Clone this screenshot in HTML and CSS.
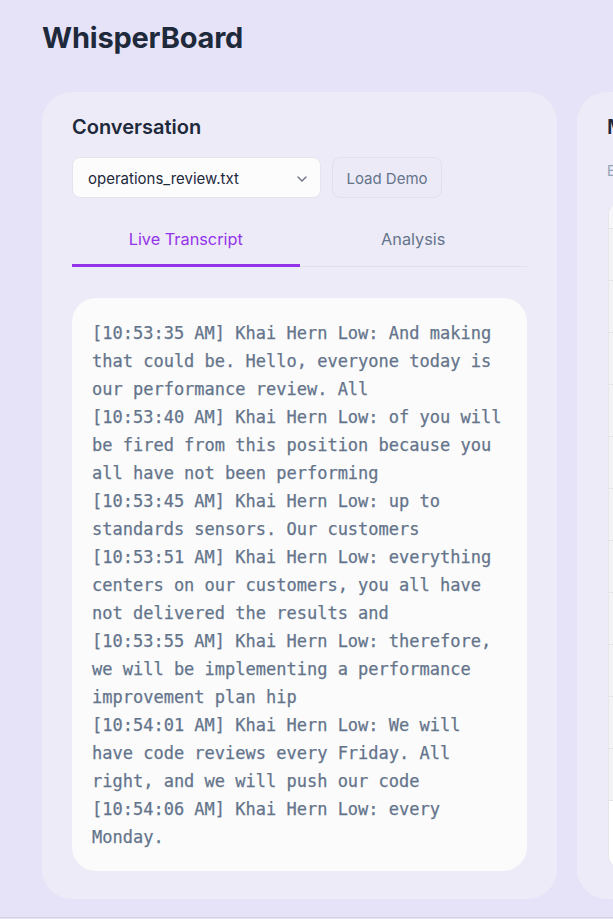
FILE: index.html
```html
<!DOCTYPE html>
<html lang="en">
<head>
<meta charset="utf-8">
<title>WhisperBoard</title>
<link rel="stylesheet" href="styles.css">
</head>
<body>
<div class="page">
  <h1 class="title">WhisperBoard</h1>
  <div class="columns">
    <section class="card conv">
      <h2 class="card-title">Conversation</h2>
      <div class="controls">
        <div class="select">
          <span>operations_review.txt</span>
          <svg class="chev" width="10" height="6" viewBox="0 0 10 6"><path d="M1 1l4 4 4-4" fill="none" stroke="#6b7280" stroke-width="1.4" stroke-linecap="round" stroke-linejoin="round"/></svg>
        </div>
        <button class="btn">Load Demo</button>
      </div>
      <div class="tabs">
        <div class="tab active">Live Transcript</div>
        <div class="tab">Analysis</div>
      </div>
      <div class="transcript">
        <div>[10:53:35 AM] Khai Hern Low: And making that could be. Hello, everyone today is our performance review. All</div>
        <div>[10:53:40 AM] Khai Hern Low: of you will be fired from this position because you all have not been performing</div>
        <div>[10:53:45 AM] Khai Hern Low: up to standards sensors. Our customers</div>
        <div>[10:53:51 AM] Khai Hern Low: everything centers on our customers, you all have not delivered the results and</div>
        <div>[10:53:55 AM] Khai Hern Low: therefore, we will be implementing a performance improvement plan hip</div>
        <div>[10:54:01 AM] Khai Hern Low: We will have code reviews every Friday. All right, and we will push our code</div>
        <div>[10:54:06 AM] Khai Hern Low: every Monday.</div>
      </div>
    </section>
    <section class="card side">
      <h2 class="card-title">Meeting Notes</h2>
      <p class="sub">Entries captured during the conversation</p>
      <div class="table">
        <div class="row head"></div>
        <div class="row"></div>
        <div class="row"></div>
        <div class="row"></div>
        <div class="row"></div>
        <div class="row"></div>
        <div class="row"></div>
        <div class="row"></div>
        <div class="row"></div>
        <div class="row"></div>
        <div class="row"></div>
        <div class="row"></div>
        <div class="blank"></div>
      </div>
    </section>
  </div>
</div>
</body>
</html>
```
FILE: styles.css
```css
html, body {
  margin: 0;
  padding: 0;
  overflow: hidden;
}
body {
  background: #e6e3f8;
  font-family: Inter, "Noto Sans", sans-serif;
  color: #1e293b;
}
.page {
  box-sizing: border-box;
  height: 918px;
  padding: 21px 0 0 42px;
  border-bottom: 1px solid #d6d5dd;
}
.title {
  margin: 0 0 37px 0;
  font-size: 29px;
  line-height: 34px;
  font-weight: 700;
  color: #1e293b;
  letter-spacing: -0.2px;
}
.columns {
  display: flex;
  gap: 20px;
  width: 1200px;
}
.card {
  box-sizing: border-box;
  width: 515px;
  height: 807px;
  background: #edebf7;
  border-radius: 30px;
  padding: 23px 30px 30px 30px;
  display: flex;
  flex-direction: column;
  flex: none;
}
.card-title {
  margin: 0;
  font-size: 20px;
  line-height: 24px;
  font-weight: 600;
  color: #1e293b;
}
.controls {
  display: flex;
  gap: 11px;
  margin-top: 18px;
}
.select {
  box-sizing: border-box;
  width: 249px;
  height: 41px;
  background: #fcfcfd;
  border: 1px solid #e5e4ee;
  border-radius: 8px;
  display: flex;
  align-items: center;
  justify-content: space-between;
  padding: 2px 13px 0 15px;
  font-size: 15px;
  color: #1e293b;
}
.chev { margin-top: 1px; }
.btn {
  box-sizing: border-box;
  height: 41px;
  width: 110px;
  background: #eceaf6;
  border: 1px solid #e2e0ee;
  border-radius: 8px;
  font-family: Inter, "Noto Sans", sans-serif;
  font-size: 15px;
  color: #64748b;
  padding: 2px 0 0 0;
}
.tabs {
  display: flex;
  margin-top: 12px;
  border-bottom: 1px solid #e0dfea;
}
.tab {
  flex: 1;
  text-align: center;
  font-size: 16.3px;
  line-height: 22px;
  padding: 18px 0 14px;
  color: #64748b;
  border-bottom: 3px solid transparent;
  margin-bottom: -1px;
}
.tab.active {
  color: #9333ea;
  border-bottom-color: #9333ea;
}
.transcript {
  margin-top: 31px;
  flex: 1;
  background: #fbfbfb;
  border-radius: 24px;
  padding: 21px 20px 20px;
  font-family: "DejaVu Sans Mono", "Liberation Mono", monospace;
  font-size: 17px;
  line-height: 28px;
  color: #64748b;
  -webkit-text-stroke: 0.25px #64748b;
}
.side .sub {
  margin: 22px 0 0 0;
  font-size: 14px;
  line-height: 20px;
  color: #94a3b8;
}
.table {
  margin-top: 20px;
  margin-left: 1px;
  flex: 1;
  background: #ffffff;
  border-radius: 14px;
  border: 1px solid #e6e5ec;
  overflow: hidden;
  display: flex;
  flex-direction: column;
}
.row {
  height: 51px;
  background: #f3f3f5;
  border-bottom: 1px solid #e3e3e8;
}
.row.head {
  height: 26px;
  background: #f7f7f9;
}
.blank {
  flex: 1;
  background: #ffffff;
}
```
